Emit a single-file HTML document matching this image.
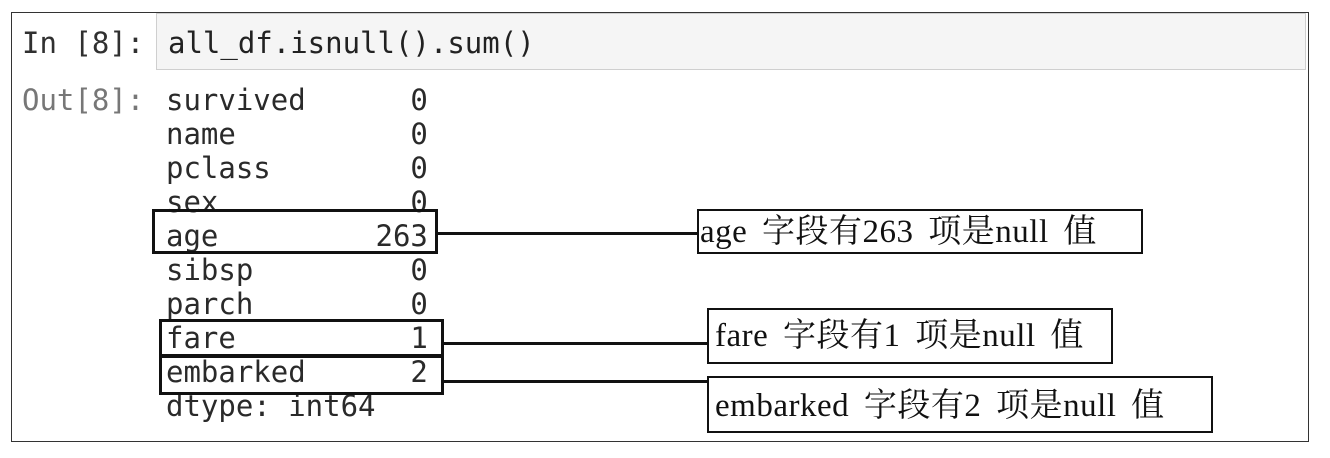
<!DOCTYPE html>
<html><head><meta charset="utf-8"><style>
body{margin:0;width:1330px;height:458px;background:#fff;position:relative;overflow:hidden}
.a{position:absolute}
.mono{font-family:"DejaVu Sans Mono","Liberation Mono",monospace;font-size:29px;color:#2a2a2a;white-space:pre;line-height:34px}
.box{position:absolute;border:3px solid #111;box-sizing:border-box}
.ln{position:absolute;height:3px;background:#111}
.lbl{position:absolute;border:2px solid #111;box-sizing:border-box;font-family:"Liberation Serif","Noto Serif CJK SC",serif;font-size:33px;color:#111;padding-left:6px;white-space:nowrap;word-spacing:6px;letter-spacing:0.5px}
</style></head><body>
<div class="a" style="left:11px;top:12px;width:1298px;height:430px;border:1px solid #333;box-sizing:border-box"></div>
<div class="a" style="left:156px;top:13px;width:1150px;height:57px;background:#f5f5f5;border:1px solid #cfcfcf;box-sizing:border-box"></div>
<div class="a mono" style="left:22px;top:26px;color:#303030">In [8]:</div>
<div class="a mono" style="left:168px;top:26px;color:#222">all_df.isnull().sum()</div>
<div class="a mono" style="left:22px;top:83px;color:#777">Out[8]:</div>
<div class="a mono" style="left:166px;top:83px">survived      0
name          0
pclass        0
sex           0
age         263
sibsp         0
parch         0
fare          1
embarked      2
dtype: int64</div>
<div class="box" style="left:152px;top:209px;width:286px;height:45px"></div>
<div class="box" style="left:159px;top:319px;width:285px;height:38px"></div>
<div class="box" style="left:159px;top:355px;width:285px;height:40px"></div>
<div class="ln" style="left:437px;top:232px;width:262px"></div>
<div class="ln" style="left:443px;top:342px;width:265px"></div>
<div class="ln" style="left:443px;top:380px;width:265px"></div>
<div class="lbl" style="left:697px;top:209px;width:446px;height:45px;line-height:42px;padding-left:1px">age 字段有263 项是null 值</div>
<div class="lbl" style="left:707px;top:308px;width:406px;height:56px;line-height:52px">fare 字段有1 项是null 值</div>
<div class="lbl" style="left:707px;top:376px;width:506px;height:57px;line-height:56px">embarked 字段有2 项是null 值</div>
</body></html>
